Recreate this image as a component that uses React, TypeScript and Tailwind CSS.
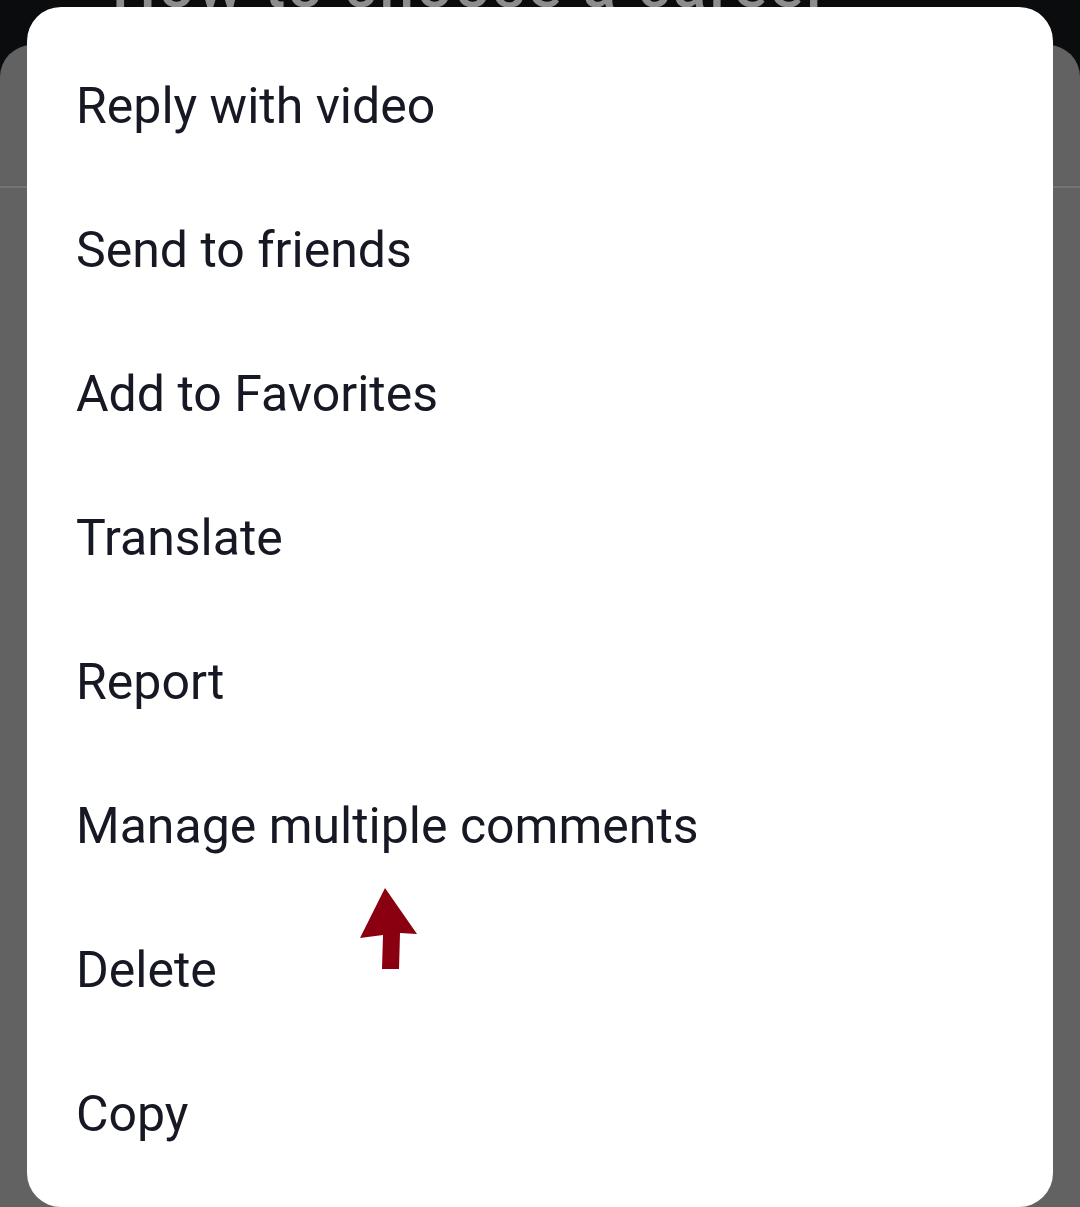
const ITEMS = [
  'Reply with video',
  'Send to friends',
  'Add to Favorites',
  'Translate',
  'Report',
  'Manage multiple comments',
  'Delete',
  'Copy',
];

const UpArrow = () => (
  <svg width="60" height="84" viewBox="0 0 60 84" className="block">
    <path d="M25 0 L57 46 L40 45 L39 81 L22 81 L23 47 L0 50 Z" fill="#8a0010" />
  </svg>
);

export default function App() {
  return (
    <div
      className="relative w-[1080px] h-[1207px] overflow-hidden bg-[#0b0c0e]"
      style={{ fontFamily: 'Roboto, "Liberation Sans", sans-serif' }}
    >
      {/* background: video strip and the comments sheet behind the menu */}
      <div className="h-[45px] overflow-hidden">
        <div className="-mt-[44px] pl-[112px] text-[62px] leading-[60px] font-medium text-[#8d8d8d] whitespace-nowrap tracking-[3px]">
          How to choose a career
        </div>
      </div>
      <div className="h-[1200px] bg-[#626262] rounded-t-[32px]">
        <div className="h-[141px]" />
        <div className="h-[2px] bg-[#747474]" />
      </div>

      {/* menu card */}
      <div className="absolute left-[27px] right-[27px] top-[7px] bottom-0 bg-white rounded-[34px]">
        <ul className="pt-[27px] flex flex-col">
          {ITEMS.map((item) => (
            <li
              key={item}
              className="h-[144px] flex items-center pl-[49px] text-[50px] text-[#161823] font-normal"
            >
              {item}
            </li>
          ))}
        </ul>
      </div>

      {/* annotation arrow */}
      <div className="absolute left-[360px] top-[888px]">
        <UpArrow />
      </div>
    </div>
  );
}
